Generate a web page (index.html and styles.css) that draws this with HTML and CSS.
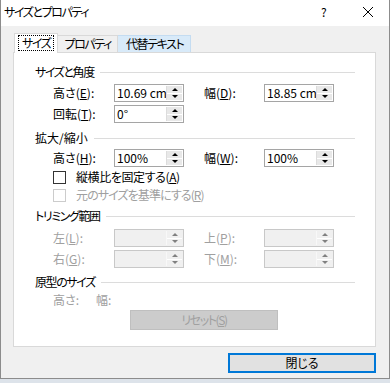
FILE: index.html
```html
<!DOCTYPE html>
<html lang="ja">
<head>
    <meta charset="UTF-8">
    <title>サイズとプロパティ</title>
    <link rel="stylesheet" href="styles.css">
</head>
<body>
    <div class="window">
        <div class="titlebar">
            <span class="title tight">サイズとプロパティ</span>
            <span class="help">?</span>
            <svg class="close" width="12" height="12" viewBox="0 0 12 12">
                <path d="M1 1 L11 11 M11 1 L1 11" stroke="#000" stroke-width="1" fill="none"/>
            </svg>
        </div>
        <div class="body">
            <div class="tabs">
                <div class="tab active"><span class="focus tight">サイズ</span></div>
                <div class="tab tight">プロパティ</div>
                <div class="tab hover tight">代替テキスト</div>
            </div>
            <div class="panel">
                <div class="heading first"><span class="tight">サイズと角度</span></div>
                <div class="row r1">
                    <span class="lbl">高さ(<u>E</u>):</span>
                    <div class="spin"><span class="val">10.69 cm</span><div class="arrows"><i class="up"></i><i class="down"></i></div></div>
                    <span></span>
                    <span class="lbl">幅(<u>D</u>):</span>
                    <div class="spin"><span class="val">18.85 cm</span><div class="arrows"><i class="up"></i><i class="down"></i></div></div>
                </div>
                <div class="row r2">
                    <span class="lbl">回転(<u>T</u>):</span>
                    <div class="spin"><span class="val">0°</span><div class="arrows"><i class="up"></i><i class="down"></i></div></div>
                </div>

                <div class="heading h2"><span>拡大/縮小</span></div>
                <div class="row r3">
                    <span class="lbl">高さ(<u>H</u>):</span>
                    <div class="spin"><span class="val">100%</span><div class="arrows"><i class="up"></i><i class="down"></i></div></div>
                    <span></span>
                    <span class="lbl">幅(<u>W</u>):</span>
                    <div class="spin"><span class="val">100%</span><div class="arrows"><i class="up"></i><i class="down"></i></div></div>
                </div>
                <div class="check c1"><span class="box"></span><span class="slight">縦横比を固定する(<u>A</u>)</span></div>
                <div class="check c2 disabled"><span class="box"></span><span class="mid">元のサイズを基準にする(<u>R</u>)</span></div>

                <div class="heading h3"><span class="tight">トリミング範囲</span></div>
                <div class="row r4 disabled">
                    <span class="lbl">左(<u>L</u>):</span>
                    <div class="spin"><span class="val"></span><div class="arrows"><i class="up"></i><i class="down"></i></div></div>
                    <span></span>
                    <span class="lbl">上(<u>P</u>):</span>
                    <div class="spin"><span class="val"></span><div class="arrows"><i class="up"></i><i class="down"></i></div></div>
                </div>
                <div class="row r5 disabled">
                    <span class="lbl">右(<u>G</u>):</span>
                    <div class="spin"><span class="val"></span><div class="arrows"><i class="up"></i><i class="down"></i></div></div>
                    <span></span>
                    <span class="lbl">下(<u>M</u>):</span>
                    <div class="spin"><span class="val"></span><div class="arrows"><i class="up"></i><i class="down"></i></div></div>
                </div>

                <div class="heading h4"><span class="tight">原型のサイズ</span></div>
                <div class="orig"><span class="oh">高さ:</span><span>幅:</span></div>
                <div class="reset"><span class="tight">リセット(<u>S</u>)</span></div>
            </div>
            <div class="footer">
                <div class="btn">閉じる</div>
            </div>
        </div>
    </div>
    <div class="strip"></div>
</body>
</html>
```

FILE: styles.css
```css
html, body {
    margin: 0;
    padding: 0;
    background: #dde3ea;
}

body {
    width: 390px;
    height: 383px;
    overflow: hidden;
    font-family: "Noto Sans CJK JP", "Noto Sans", sans-serif;
    font-size: 12px;
    font-feature-settings: "palt";
    color: #000;
}

/* katakana in the dialog font is much narrower than in Noto */
.tight {
    letter-spacing: -1.4px;
}

.mid {
    letter-spacing: -0.9px;
}

.slight {
    letter-spacing: -0.4px;
}

.window {
    box-sizing: border-box;
    width: 390px;
    height: 379px;
    border: 1px solid #8c8c8c;
    border-top: none;
    background: #f0f0f0;
    display: flex;
    flex-direction: column;
}

.titlebar {
    height: 26px;
    background: #fff;
    display: flex;
    align-items: center;
    padding-left: 3px;
    line-height: 14px;
}

.title {
    flex: 1;
    margin-top: -2px;
}

.help {
    width: 41px;
    margin-top: -2px;
}

.close {
    margin-right: 15px;
    margin-top: -2px;
}

.body {
    flex: 1;
    display: flex;
    flex-direction: column;
    padding: 7px 13px 4px 12px;
}

.tabs {
    display: flex;
    align-items: flex-end;
    height: 19px;
    padding-left: 1px;
}

.tab {
    box-sizing: border-box;
    height: 17px;
    line-height: 15px;
    padding: 0 6px;
    border: 1px solid #d9d9d9;
    border-bottom: none;
    background: #f0f0f0;
}

.tab.active {
    height: 20px;
    margin-bottom: -1px;
    padding: 1px 3px 0 3px;
    background: #fff;
    position: relative;
    z-index: 1;
}

.tab.active .focus {
    display: inline-block;
    border: 1px dotted #000;
    padding: 0 3px;
    line-height: 14px;
}

.tab + .tab {
    border-left: none;
}

.tab.hover {
    background: #d8eaf9;
    border-color: #c4dcf1;
    padding: 0 7px 0 8px;
}

.panel {
    box-sizing: border-box;
    height: 295px;
    background: #fff;
    border: 1px solid #d9d9d9;
    display: flex;
    flex-direction: column;
}

.heading {
    display: flex;
    align-items: center;
    height: 14px;
    line-height: 14px;
    margin: 0 20px 0 21px;
}

.heading::after {
    content: '';
    flex: 1;
    height: 1px;
    background: #dcdcdc;
    margin-left: 6px;
}

.heading.first { margin-top: 12px; }
.heading.h2 { margin-top: 8px; }
.heading.h3 { margin-top: 6px; }
.heading.h4 { margin-top: 7px; }

.row {
    display: grid;
    grid-template-columns: 61px 70px 20px 60px 70px;
    align-items: center;
    height: 18px;
    padding-left: 39px;
}

.r1 { margin-top: 5px; }
.r2 { margin-top: 3px; }
.r3 { margin-top: 4px; }
.r4 { margin-top: 6px; }
.r5 { margin-top: 3px; }

.lbl {
    line-height: 14px;
    white-space: nowrap;
}

.spin {
    box-sizing: border-box;
    height: 18px;
    border: 1px solid #a5a5a5;
    background: #fff;
    display: flex;
}

.spin .val {
    flex: 1;
    min-width: 0;
    padding-left: 2px;
    line-height: 15px;
    white-space: nowrap;
}

.arrows {
    width: 15px;
    flex: none;
    margin: 1px 1px 1px 0;
    border-left: 1px solid #dcdcdc;
    display: flex;
    flex-direction: column;
}

.arrows i {
    flex: 1;
    display: flex;
    align-items: center;
    justify-content: center;
    background: #e8e8e8;
}

.arrows i + i {
    border-top: 1px solid #fff;
}

.arrows i::before {
    content: '';
    width: 0;
    height: 0;
    border-left: 3px solid transparent;
    border-right: 3px solid transparent;
}

.arrows .up::before { border-bottom: 3px solid #000; }
.arrows .down::before { border-top: 3px solid #000; }

.disabled {
    color: #a0a0a0;
}

.disabled .spin {
    border-color: #c8c8c8;
    background: #f0f0f0;
}

.disabled .arrows {
    border-left-color: #f8f8f8;
}

.disabled .arrows i {
    background: #f0f0f0;
}

.disabled .arrows .up::before { border-bottom-color: #808080; }
.disabled .arrows .down::before { border-top-color: #808080; }

.check {
    display: flex;
    align-items: center;
    height: 16px;
    line-height: 14px;
    padding-left: 39px;
    white-space: nowrap;
}

.c1 { margin-top: 2px; }
.c2 { margin-top: 2px; }

.box {
    box-sizing: border-box;
    width: 13px;
    height: 13px;
    border: 1px solid #333;
    background: #fff;
    margin-right: 10px;
}

.check.disabled .box {
    border-color: #cccccc;
}

.orig {
    margin-top: 4px;
    height: 14px;
    line-height: 14px;
    padding-left: 39px;
    color: #a0a0a0;
}

.orig .oh {
    display: inline-block;
    width: 43px;
}

.reset {
    box-sizing: border-box;
    margin: 3px 0 0 116px;
    width: 148px;
    height: 20px;
    line-height: 18px;
    text-align: center;
    background: #cccccc;
    border: 1px solid #bfbfbf;
    color: #a0a0a0;
}

.footer {
    display: flex;
    justify-content: flex-end;
    margin-top: 6px;
}

.btn {
    box-sizing: border-box;
    width: 148px;
    height: 20px;
    line-height: 16px;
    text-align: center;
    background: #e1e1e1;
    border: 2px solid #0078d7;
}

.strip {
    height: 4px;
    background: #dde3ea;
}
```
